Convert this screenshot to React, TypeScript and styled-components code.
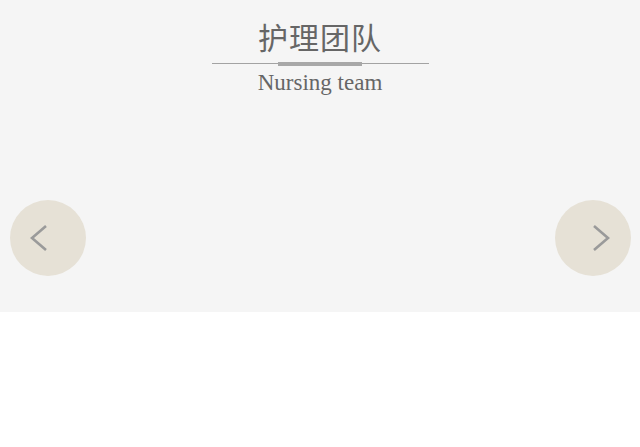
import styled, { createGlobalStyle } from 'styled-components'

const GlobalStyle = createGlobalStyle`
    html, body {
        margin: 0;
        padding: 0;
        background: #ffffff;
    }
`

const Section = styled.section`
    height: 312px;
    background: #f5f5f5;
    display: flex;
    flex-direction: column;
    box-sizing: border-box;
    padding-top: 17px;
`

const Header = styled.div`
    display: flex;
    flex-direction: column;
    align-items: center;
`

const Title = styled.h2`
    margin: 0;
    font-family: "Noto Sans CJK SC", sans-serif;
    font-weight: 400;
    font-size: 30px;
    line-height: 38px;
    color: #666666;
    letter-spacing: 1px;
`

const Divider = styled.div`
    position: relative;
    width: 217px;
    height: 5px;
    display: flex;
    align-items: center;
    justify-content: center;
    margin-top: 6px;

    &::before {
        content: '';
        position: absolute;
        left: 0;
        right: 0;
        top: 2px;
        height: 1px;
        background: #a3a3a3;
    }
`

const DividerBar = styled.div`
    position: relative;
    width: 84px;
    height: 4px;
    background: #a8a8a8;
`

const Subtitle = styled.p`
    margin: 2px 0 0;
    font-family: "Liberation Serif", serif;
    font-size: 23px;
    line-height: 30px;
    color: #666666;
`

const Carousel = styled.div`
    display: flex;
    justify-content: space-between;
    align-items: center;
    padding: 0 9px 0 10px;
    margin-top: 102px;
`

const ArrowButton = styled.button<{ $side: 'left' | 'right' }>`
    width: 76px;
    height: 76px;
    border-radius: 50%;
    border: none;
    background: #e6e1d6;
    display: flex;
    align-items: center;
    justify-content: center;
    padding: ${p => (p.$side === 'left' ? '0 18px 0 0' : '0 0 0 16px')};
    cursor: pointer;
`

const Chevron = ({ dir }: { dir: 'left' | 'right' }) => (
    <svg width="20" height="28" viewBox="0 0 20 28">
        <polyline
            points={dir === 'left' ? '17,2 3,14 17,26' : '3,2 17,14 3,26'}
            fill="none"
            stroke="#9a9a9a"
            strokeWidth="2.6"
        />
    </svg>
)

const App = () => {
    return (
        <>
            <GlobalStyle />
            <Section>
                <Header>
                    <Title>护理团队</Title>
                    <Divider>
                        <DividerBar />
                    </Divider>
                    <Subtitle>Nursing team</Subtitle>
                </Header>
                <Carousel>
                    <ArrowButton $side="left" aria-label="prev">
                        <Chevron dir="left" />
                    </ArrowButton>
                    <ArrowButton $side="right" aria-label="next">
                        <Chevron dir="right" />
                    </ArrowButton>
                </Carousel>
            </Section>
        </>
    )
}

export default App
